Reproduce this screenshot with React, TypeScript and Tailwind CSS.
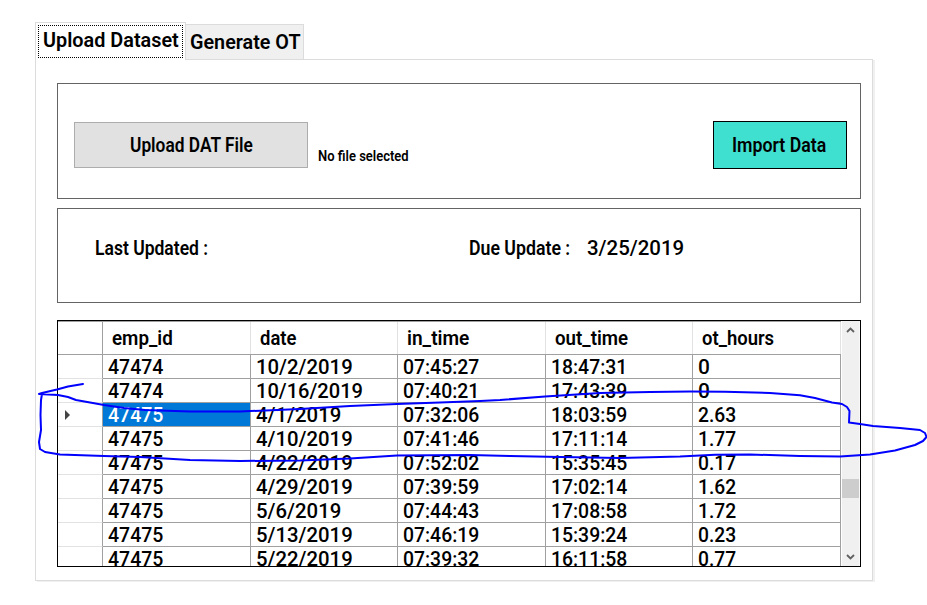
import { useLayoutEffect, useRef } from "react";

/** Single-line label condensed or widened horizontally to an exact width. */
function Label({ text, width, className = "" }: { text: string; width: number; className?: string }) {
  const ref = useRef<HTMLSpanElement>(null);
  useLayoutEffect(() => {
    const el = ref.current;
    if (!el) return;
    const fit = () => {
      el.style.transform = `scaleX(${width / el.offsetWidth})`;
    };
    fit();
    document.fonts?.ready.then(fit);
  }, [text, width]);
  return (
    <span className={`block shrink-0 ${className}`} style={{ width }}>
      <span ref={ref} className="inline-block origin-left whitespace-nowrap align-top">
        {text}
      </span>
    </span>
  );
}

// Advance widths of the grid's numerals and separators.
function cellWidth(text: string) {
  return [...text].reduce((sum, c) => sum + (c === "/" ? 9.5 : c === ":" || c === "." ? 5 : 11), 0.5);
}

const headers: [string, number][] = [
  ["emp_id", 61],
  ["date", 36],
  ["in_time", 62],
  ["out_time", 73],
  ["ot_hours", 72],
];

const rows = [
  ["47474", "10/2/2019", "07:45:27", "18:47:31", "0"],
  ["47474", "10/16/2019", "07:40:21", "17:43:39", "0"],
  ["47475", "4/1/2019", "07:32:06", "18:03:59", "2.63"],
  ["47475", "4/10/2019", "07:41:46", "17:11:14", "1.77"],
  ["47475", "4/22/2019", "07:52:02", "15:35:45", "0.17"],
  ["47475", "4/29/2019", "07:39:59", "17:02:14", "1.62"],
  ["47475", "5/6/2019", "07:44:43", "17:08:58", "1.72"],
  ["47475", "5/13/2019", "07:46:19", "15:39:24", "0.23"],
  ["47475", "5/22/2019", "07:39:32", "16:11:58", "0.77"],
];

const columns = "grid grid-cols-[45px_148px_147px_148px_147px_148px]";

function DataGrid() {
  return (
    <div className="mt-[17px] flex h-[247px] w-[804px] overflow-hidden border border-black">
      <div className="w-[783px] shrink-0 border-t border-[#a0a0a0]">
        <div className={`${columns} h-[33px] border-b border-[#a0a0a0]`}>
          <div className="border-r border-[#a0a0a0]" />
          {headers.map(([name, width]) => (
            <div key={name} className="border-r border-[#e2e2e2] pt-[4px] pl-[9px] text-[20px] leading-[24px] font-semibold">
              <Label text={name} width={width} />
            </div>
          ))}
        </div>
        {rows.map((row, r) => (
          <div key={r} className={`${columns} h-[24px]`}>
            <div className="flex items-center border-r border-b border-r-[#a0a0a0] border-b-[#e2e2e2] pl-[7px]">
              {r === 2 && (
                <svg width="5" height="10" viewBox="0 0 5 10">
                  <path d="M0 0L5 5L0 10Z" fill="#444" />
                </svg>
              )}
            </div>
            {row.map((cell, c) => (
              <div
                key={c}
                className={`border-r border-b border-[#a0a0a0] pl-[5px] text-[20px] leading-[24px] ${
                  r === 2 && c === 0 ? "bg-[#0078d7] text-white" : ""
                }`}
              >
                <Label text={cell} width={cellWidth(cell)} className="h-[23px]" />
              </div>
            ))}
          </div>
        ))}
      </div>
      <div className="ml-px flex w-[17px] flex-col items-center bg-[#f0f0f0]">
        <svg className="mt-[6px] shrink-0" width="9" height="6" viewBox="0 0 9 6" fill="none" stroke="#606060" strokeWidth="1.8">
          <path d="M1 5L4.5 1.5L8 5" />
        </svg>
        <div className="mt-[146px] h-[19px] w-full shrink-0 bg-[#cdcdcd]" />
        <svg className="mt-[56px] shrink-0" width="9" height="6" viewBox="0 0 9 6" fill="none" stroke="#606060" strokeWidth="1.8">
          <path d="M1 1L4.5 4.5L8 1" />
        </svg>
      </div>
      <div className="flex-1 bg-[#f8f8f8]" />
    </div>
  );
}

export default function App() {
  return (
    <div className="relative h-[605px] w-[927px] overflow-hidden bg-white pt-[22px] pl-[35px] font-['Roboto',sans-serif] font-medium text-black">
      <div className="flex h-[37px] items-end font-semibold">
        <div className="z-10 -mb-px h-[38px] w-[151px] border border-b-0 border-[#dcdcdc] bg-white p-[2px]">
          <div className="h-[33px] w-[145px] border border-dotted border-black pl-[4px] text-[21px] leading-[28px]">
            <Label text="Upload Dataset" width={136} />
          </div>
        </div>
        <div className="mt-auto -mb-px h-[36px] w-[118px] border border-l-0 border-[#dcdcdc] bg-[#f0f0f0] pt-[4px] pl-[4px] text-[21px] leading-[26px]">
          <Label text="Generate OT" width={111} />
        </div>
      </div>
      <div className="h-[522px] w-[838px] border border-[#dcdcdc] bg-white pt-[23px] pl-[21px] shadow-[2px_1px_0_#f0f0f0]">
        <section className="flex h-[116px] w-[804px] items-start border border-[#646464] pl-[16px] font-semibold">
          <div className="mt-[38px] flex h-[46px] w-[234px] justify-center border border-[#adadad] bg-[#e1e1e1] pt-[10px] text-[20px] leading-[24px]">
            <Label text="Upload DAT File" width={123} />
          </div>
          <Label text="No file selected" width={91} className="mt-[62px] ml-[10px] text-[15px] leading-[20px]" />
          <div className="mt-[37px] mr-[13px] ml-auto flex h-[48px] w-[134px] border border-black bg-[#40e0d0] pt-[11px] pl-[18px] text-[20px] leading-[24px]">
            <Label text="Import Data" width={94} />
          </div>
        </section>
        <section className="mt-[9px] flex h-[95px] w-[804px] items-start border border-[#646464] pt-[27px] pl-[37px] text-[20px] leading-[24px]">
          <Label text="Last Updated :" width={113} className="font-semibold" />
          <Label text="Due Update :" width={101} className="ml-[261px] font-semibold" />
          <Label text="3/25/2019" width={97} className="ml-[17px]" />
        </section>
        <DataGrid />
      </div>
      <svg
        className="pointer-events-none absolute inset-0 z-20"
        width="927"
        height="605"
        viewBox="0 0 927 605"
        fill="none"
        stroke="#0000ff"
        strokeWidth="2"
        strokeLinejoin="round"
        strokeLinecap="round"
      >
        <path d="M83 384L68 386.5L57 389.5L42 393L39 394L58 395L68 397L76 400L104 405L124 408L145 410L190 411.5L240 411.5L300 409L350 406L397 404L440 402.5L480 401L500 400L545 396.5L600 393L650 392L690 391.5L725 391.7L770 393L800 395.3L815 398L832 402.5L842 404L847 407L849.5 411L849 422.5L860 424L873 426L900 428L920 430L925 433L926.5 437L923 441L915 445L895 450.5L870 454.5L840 456.5L800 456L750 454.5L715 454.7L680 456.5L620 458L560 457L510 456L470 455L397 455.5L350 458.5L300 460.5L240 461L190 460L140 457L104 456L60 454.5L45 452L40 449L39 442L41 430L40.5 415L41 400L42 394" />
      </svg>
    </div>
  );
}
